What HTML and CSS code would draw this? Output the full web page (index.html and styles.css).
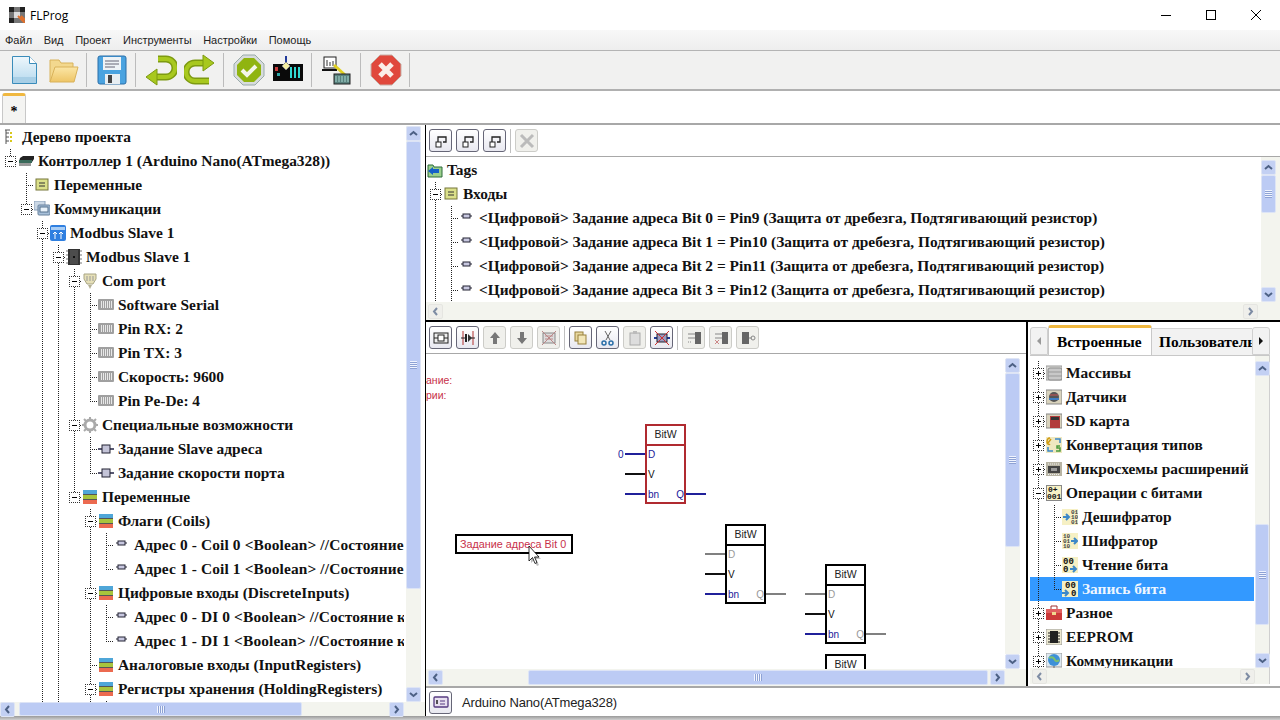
FILE: index.html
```html
<!DOCTYPE html>
<html lang="ru">
<head>
    <meta charset="UTF-8">
    <title>FLProg</title>
    <link rel="stylesheet" href="styles.css">
</head>
<body>
    <svg class="defs">
        <defs>
            <linearGradient id="docFill" x1="0" y1="0" x2="0" y2="1"><stop offset="0" stop-color="#eef7fc"/><stop offset="1" stop-color="#b5d9ee"/></linearGradient>
            <linearGradient id="folderFill" x1="0" y1="0" x2="0" y2="1"><stop offset="0" stop-color="#fbe6a6"/><stop offset="1" stop-color="#eec566"/></linearGradient>
            <symbol id="i-book" viewBox="0 0 16 16"><path d="M3 1h5M4 1v14M4 4h3M4 8h3M4 12h3" stroke="#555" fill="none"/><path d="M9 3v2M9 7v2M9 11v2" stroke="#d8c81c" stroke-width="2"/></symbol>
            <symbol id="i-mcu" viewBox="0 0 16 16"><path d="M2 5l3-2h11v3l-2 3H1z" fill="#222"/><rect x="1" y="7" width="13" height="3" fill="#3a6a5a"/><path d="M2 10v3M4 10v3M6 10v3M8 10v3M10 10v3M12 10v3" stroke="#333"/></symbol>
            <symbol id="i-vars" viewBox="0 0 16 16"><rect x="2" y="2" width="12" height="11" fill="#dbe08a" stroke="#77773a"/><path d="M5 6h6M5 9h6" stroke="#333"/></symbol>
            <symbol id="i-comm" viewBox="0 0 16 16"><rect x="0" y="0" width="11" height="9" fill="#cbd8e6" stroke="#8ba0b8"/><rect x="4" y="4" width="12" height="10" rx="1" fill="#a9c1da" stroke="#66809c"/><rect x="6" y="6" width="8" height="5" fill="#e9f2fa" stroke="#55708c"/></symbol>
            <symbol id="i-modbus" viewBox="0 0 16 16"><rect width="16" height="16" rx="2" fill="#2f7fe0"/><rect x="1" y="2" width="14" height="3" fill="#a8cdf5"/><path d="M5 14V7M3 9l2-2 2 2M11 14V7M9 9l2-2 2 2" stroke="#fff" fill="none"/></symbol>
            <symbol id="i-chip" viewBox="0 0 16 16"><rect x="2" y="0" width="12" height="16" fill="#333"/><rect x="4" y="1" width="8" height="14" fill="#4c4c4c"/><rect x="7" y="7" width="2" height="2" fill="#111"/><path d="M0 2h2M0 6h2M0 10h2M0 14h2M14 2h2M14 6h2M14 10h2M14 14h2" stroke="#777"/></symbol>
            <symbol id="i-port" viewBox="0 0 16 16"><path d="M2 1h12v5l-3 5H5L2 6z" fill="#e6e0b8" stroke="#a8a484"/><path d="M5 3v5M8 3v5M11 3v5" stroke="#999"/><path d="M6 12h4l-2 4z" fill="#b4b094"/></symbol>
            <symbol id="i-pin" viewBox="0 0 16 16"><rect y="2" width="16" height="11" rx="1" fill="#a0a0a0"/><path d="M3.500 4v7M5.500 4v7M7.500 4v7M9.500 4v7M11.500 4v7M13.500 4v7" stroke="#e8e8e8"/></symbol>
            <symbol id="i-gear" viewBox="0 0 16 16"><circle cx="8" cy="8" r="5" fill="none" stroke="#aaa" stroke-width="3"/><path d="M8 0v3M8 13v3M0 8h3M13 8h3M2 2l2 2M12 12l2 2M14 2l-2 2M2 14l2-2" stroke="#aaa" stroke-width="2"/></symbol>
            <symbol id="i-comp" viewBox="0 0 16 16"><path d="M0 8h4M12 8h4" stroke="#224" stroke-width="1.5"/><rect x="4" y="4" width="8" height="8" fill="#c4c4d8" stroke="#223"/></symbol>
            <symbol id="i-stack" viewBox="0 0 16 16"><rect x="1" y="1" width="14" height="4" fill="#4fa6d8"/><rect x="1" y="6" width="14" height="4" fill="#a8c43c"/><rect x="1" y="11" width="14" height="4" fill="#ec6a50"/><path d="M1 5.5h14M1 10.500h14" stroke="#555"/></symbol>
            <symbol id="i-small" viewBox="0 0 16 16"><path d="M2 6h3M11 6h2" stroke="#223"/><rect x="4" y="4" width="7" height="4" fill="#c8c8e0" stroke="#223"/></symbol>
            <symbol id="i-tags" viewBox="0 0 16 16"><path d="M1 3h5l1 2h8v10H1z" fill="#9bd08c" stroke="#2d6a3a"/><path d="M1 9l5-4v2h6v4H6v2z" fill="#1560c8"/></symbol>
            <symbol id="i-db" viewBox="0 0 16 16"><rect x="0" y="1" width="16" height="14" fill="#dcdcd8" stroke="#999"/><rect x="2" y="3" width="14" height="12" rx="2" fill="#c8c8c8" stroke="#8c8c8c"/><path d="M2 7h14M2 11h14" stroke="#999"/></symbol>
            <symbol id="i-sensor" viewBox="0 0 16 16"><rect x="0" y="1" width="16" height="14" fill="#d8d2bc" stroke="#888"/><circle cx="8" cy="8" r="5" fill="#555"/><path d="M3 9h10v2H3z" fill="#3f7cc0"/><path d="M4 6h8" stroke="#c55"/></symbol>
            <symbol id="i-sd" viewBox="0 0 16 16"><rect x="0" y="1" width="16" height="14" fill="#d8d2bc" stroke="#888"/><rect x="4" y="3" width="10" height="12" fill="#b23a3a"/><rect x="5" y="4" width="8" height="3" fill="#333"/></symbol>
            <symbol id="i-conv" viewBox="0 0 16 16"><rect width="16" height="16" fill="#efe8c0"/><path d="M2 6l3-4M4 1c-2 0-3 2-3 4s2 3 3 2" stroke="#d09a10" fill="none" stroke-width="1.500"/><path d="M9 2h5v4M2 10v4h5" stroke="#3d88c8" fill="none" stroke-width="1.500"/><path d="M14 9h-3v2h3v3h-4" stroke="#4c9a3c" fill="none" stroke-width="1.500"/></symbol>
            <symbol id="i-ic" viewBox="0 0 16 16"><rect x="0" y="1" width="16" height="14" fill="#b8b4a4"/><rect x="2" y="5" width="12" height="7" fill="#444"/><rect x="5" y="7" width="6" height="3" fill="#999"/><path d="M2 3h12M2 13.500h12" stroke="#eee" stroke-dasharray="1 1"/></symbol>
            <symbol id="i-bits" viewBox="0 0 16 16"><rect x=".5" y=".5" width="15" height="15" fill="#f6f0c4" stroke="#888"/><text class="bit-txt" x="2" y="7">0+</text><text class="bit-txt" x="1" y="14">001</text></symbol>
            <symbol id="i-dec" viewBox="0 0 16 16"><rect width="16" height="16" fill="#f6f0c4"/><path d="M1 8h5M4 5l3 3-3 3" stroke="#3d88c8" fill="none" stroke-width="2"/><text class="bit-txt thin" x="9" y="5">01</text><text class="bit-txt thin" x="9" y="10">10</text><text class="bit-txt thin" x="9" y="15">01</text></symbol>
            <symbol id="i-enc" viewBox="0 0 16 16"><rect width="16" height="16" fill="#f6f0c4"/><path d="M9 8h5M12 5l3 3-3 3" stroke="#3d88c8" fill="none" stroke-width="2"/><text class="bit-txt thin" x="1" y="5">10</text><text class="bit-txt thin" x="1" y="10">01</text><text class="bit-txt thin" x="1" y="15">10</text></symbol>
            <symbol id="i-read" viewBox="0 0 16 16"><rect width="16" height="16" fill="#f6f0c4"/><text class="bit-txt big" x="1" y="7">00</text><text class="bit-txt big" x="1" y="15">0</text><path d="M8 12h5M11 9l3 3-3 3" stroke="#3d88c8" fill="none" stroke-width="2"/></symbol>
            <symbol id="i-write" viewBox="0 0 16 16"><rect width="16" height="16" fill="#f6f0c4"/><text class="bit-txt big" x="3" y="7">00</text><text class="bit-txt big" x="9" y="15">0</text><path d="M0 12h5M3 9l3 3-3 3" stroke="#3d88c8" fill="none" stroke-width="2"/></symbol>
            <symbol id="i-case" viewBox="0 0 16 16"><path d="M5 4V1h6v3" stroke="#9c3030" fill="none"/><rect y="4" width="16" height="11" fill="#cc3a3a"/><rect y="4" width="16" height="4" fill="#e06060"/><rect x="6" y="7" width="4" height="3" fill="#f0d890"/></symbol>
            <symbol id="i-eeprom" viewBox="0 0 16 16"><rect width="16" height="16" fill="#ece8d0" stroke="#999"/><rect x="4" y="2" width="8" height="12" fill="#222"/><path d="M2 4h2M2 7h2M2 10h2M2 13h2M12 4h2M12 7h2M12 10h2M12 13h2" stroke="#222"/></symbol>
            <symbol id="i-globe" viewBox="0 0 16 16"><rect width="16" height="14" fill="#dde8f0" stroke="#999"/><circle cx="8" cy="7" r="6" fill="#3d90d8"/><path d="M3 5c3-2 5 0 6 2s3 1 4 0" stroke="#7cc070" fill="none" stroke-width="2"/><path d="M8 13v3M4 16h8" stroke="#666"/></symbol>
            <symbol id="b-link" viewBox="0 0 16 16"><path d="M5 9V4h8v5h-3" fill="none" stroke="#222" stroke-width="1.300"/><rect x="3" y="9" width="5" height="5" fill="#fff" stroke="#222"/></symbol>
        </defs>
    </svg>

    <header class="titlebar">
        <svg class="app-icon" viewBox="0 0 16 16"><rect width="16" height="16" fill="#777"/><path d="M0 0h5v5H0zM11 0h5v5h-5zM0 11h5v5H0z" fill="#222"/><path d="M5 5h6v6H5z" fill="#ddd"/><path d="M9 9l7 7M12 9l4 4" stroke="#e0702c" stroke-width="2"/></svg>
        <span class="app-name">FLProg</span>
        <div class="win-btns">
            <svg viewBox="0 0 10 10"><path d="M0 5.500h10" stroke="#000"/></svg>
            <svg viewBox="0 0 10 10"><rect x=".5" y=".5" width="9" height="9" fill="none" stroke="#000"/></svg>
            <svg viewBox="0 0 10 10"><path d="M0 0l10 10M10 0L0 10" stroke="#000"/></svg>
        </div>
    </header>

    <nav class="menubar">
        <span>Файл</span><span>Вид</span><span>Проект</span><span>Инструменты</span><span>Настройки</span><span>Помощь</span>
    </nav>

    <div class="toolbar">
        <button class="tool"><svg viewBox="0 0 32 32"><path d="M4.500 2.500h17l7 7v20h-24z" fill="url(#docFill)" stroke="#3a8cba"/><path d="M21.500 2.500v7h7" fill="#fff" stroke="#3a8cba"/><rect x="5" y="23" width="23" height="6" fill="#a8cfe6"/></svg></button>
        <button class="tool"><svg viewBox="0 0 32 32"><path d="M3 28V6h9l2 3h12v4" fill="#f3d88e" stroke="#d9b25a"/><path d="M3 28l5-15h23l-4 15z" fill="url(#folderFill)" stroke="#d9b25a"/></svg></button>
        <i class="tool-sep"></i>
        <button class="tool"><svg viewBox="0 0 32 32"><rect x="2" y="2" width="28" height="28" rx="2" fill="#4aa3e0" stroke="#2a6ea8"/><rect x="7" y="3" width="18" height="13" fill="#eef3f6"/><path d="M9 7h14M9 10h14M9 13h10" stroke="#667"/><rect x="9" y="20" width="15" height="10" fill="#e8eef2"/><rect x="12" y="21" width="4" height="8" fill="#444"/></svg></button>
        <i class="tool-sep"></i>
        <button class="tool"><svg viewBox="0 0 32 32"><path d="M13 5h8a8.500 8.500 0 0 1 0 18H7" fill="none" stroke="#7d9a10" stroke-width="7"/><path d="M13 5h8a8.500 8.500 0 0 1 0 18H7" fill="none" stroke="#a8c81e" stroke-width="4"/><path d="M12 15v16L1 23z" fill="#a8c81e" stroke="#7d9a10"/></svg></button>
        <button class="tool"><svg viewBox="0 0 32 32"><path d="M19 9h-8a8.500 8.500 0 0 0 0 18h14" fill="none" stroke="#7d9a10" stroke-width="7"/><path d="M19 9h-8a8.500 8.500 0 0 0 0 18h14" fill="none" stroke="#a8c81e" stroke-width="4"/><path d="M19 1v16l11-8z" fill="#a8c81e" stroke="#7d9a10"/></svg></button>
        <i class="tool-sep"></i>
        <button class="tool"><svg viewBox="0 0 32 32"><path d="M10 1h12l9 9v12l-9 9H10l-9-9V10z" fill="#d8dcdc" stroke="#9aa"/><path d="M11 4h10l7 7v10l-7 7H11l-7-7V11z" fill="#90b410"/><path d="M9 16l5 5 9-9" fill="none" stroke="#f4f6e8" stroke-width="4"/></svg></button>
        <button class="tool"><svg viewBox="0 0 32 32"><rect x="1" y="10" width="30" height="17" fill="#0a0a0a"/><path d="M19 13v11M23 13v11M27 13v11" stroke="#30d8d0" stroke-width="2"/><rect x="3" y="13" width="3" height="4" fill="#c83c3c"/><path d="M5 19h3v3H5z" fill="#30a8a8"/><path d="M14 2v14" stroke="#223a9a" stroke-width="2"/><path d="M14 8l4 4-4 4-4-4z" fill="#f4eea0" stroke="#888"/></svg></button>
        <i class="tool-sep"></i>
        <button class="tool"><svg viewBox="0 0 32 32"><rect x="3" y="3" width="12" height="11" fill="#fff" stroke="#222"/><path d="M6 6v6M9 8v4M12 7v5" stroke="#333"/><path d="M1 16h15" stroke="#111" stroke-width="2"/><path d="M13 11l11 10" stroke="#e0d020" stroke-width="3"/><rect x="13" y="20" width="16" height="10" fill="#58807c" stroke="#222"/><path d="M15 22v6M18 22v6M21 22v6M24 22v6M27 22v6" stroke="#a8d8d0"/></svg></button>
        <i class="tool-sep"></i>
        <button class="tool"><svg viewBox="0 0 32 32"><path d="M10 1h12l9 9v12l-9 9H10l-9-9V10z" fill="#e0483c" stroke="#c8b0a8"/><path d="M10 10l12 12M22 10L10 22" stroke="#fbeee8" stroke-width="5"/></svg></button>
        <i class="tool-sep"></i>
    </div>

    <div class="tabstrip">
        <div class="doc-tab">*</div>
    </div>

    <main class="workspace">
        <section class="left-pane">
            <div class="pane-body">
                <div class="tree">
                    <div class="row"><svg class="ic"><use href="#i-book"/></svg><span>Дерево проекта</span></div>
                    <div class="row"><i class="g elbow"><b class="x minus"></b></i><svg class="ic"><use href="#i-mcu"/></svg><span>Контроллер 1 (Arduino Nano(ATmega328))</span></div>
                    <div class="row"><i class="g"></i><i class="g tee"></i><svg class="ic"><use href="#i-vars"/></svg><span>Переменные</span></div>
                    <div class="row"><i class="g"></i><i class="g elbow"><b class="x minus"></b></i><svg class="ic"><use href="#i-comm"/></svg><span>Коммуникации</span></div>
                    <div class="row"><i class="g"></i><i class="g"></i><i class="g tee"><b class="x minus"></b></i><svg class="ic"><use href="#i-modbus"/></svg><span>Modbus Slave 1</span></div>
                    <div class="row"><i class="g"></i><i class="g"></i><i class="g line"></i><i class="g tee"><b class="x minus"></b></i><svg class="ic"><use href="#i-chip"/></svg><span>Modbus Slave 1</span></div>
                    <div class="row"><i class="g"></i><i class="g"></i><i class="g line"></i><i class="g line"></i><i class="g tee"><b class="x minus"></b></i><svg class="ic"><use href="#i-port"/></svg><span>Com port</span></div>
                    <div class="row"><i class="g"></i><i class="g"></i><i class="g line"></i><i class="g line"></i><i class="g line"></i><i class="g tee"></i><svg class="ic"><use href="#i-pin"/></svg><span>Software Serial</span></div>
                    <div class="row"><i class="g"></i><i class="g"></i><i class="g line"></i><i class="g line"></i><i class="g line"></i><i class="g tee"></i><svg class="ic"><use href="#i-pin"/></svg><span>Pin RX: 2</span></div>
                    <div class="row"><i class="g"></i><i class="g"></i><i class="g line"></i><i class="g line"></i><i class="g line"></i><i class="g tee"></i><svg class="ic"><use href="#i-pin"/></svg><span>Pin TX: 3</span></div>
                    <div class="row"><i class="g"></i><i class="g"></i><i class="g line"></i><i class="g line"></i><i class="g line"></i><i class="g tee"></i><svg class="ic"><use href="#i-pin"/></svg><span>Скорость: 9600</span></div>
                    <div class="row"><i class="g"></i><i class="g"></i><i class="g line"></i><i class="g line"></i><i class="g line"></i><i class="g elbow"></i><svg class="ic"><use href="#i-pin"/></svg><span>Pin Pe-De: 4</span></div>
                    <div class="row"><i class="g"></i><i class="g"></i><i class="g line"></i><i class="g line"></i><i class="g tee"><b class="x minus"></b></i><svg class="ic"><use href="#i-gear"/></svg><span>Специальные возможности</span></div>
                    <div class="row"><i class="g"></i><i class="g"></i><i class="g line"></i><i class="g line"></i><i class="g line"></i><i class="g tee"></i><svg class="ic"><use href="#i-comp"/></svg><span>Задание Slave адреса</span></div>
                    <div class="row"><i class="g"></i><i class="g"></i><i class="g line"></i><i class="g line"></i><i class="g line"></i><i class="g elbow"></i><svg class="ic"><use href="#i-comp"/></svg><span>Задание скорости порта</span></div>
                    <div class="row"><i class="g"></i><i class="g"></i><i class="g line"></i><i class="g line"></i><i class="g elbow"><b class="x minus"></b></i><svg class="ic"><use href="#i-stack"/></svg><span>Переменные</span></div>
                    <div class="row"><i class="g"></i><i class="g"></i><i class="g line"></i><i class="g line"></i><i class="g"></i><i class="g tee"><b class="x minus"></b></i><svg class="ic"><use href="#i-stack"/></svg><span>Флаги (Coils)</span></div>
                    <div class="row"><i class="g"></i><i class="g"></i><i class="g line"></i><i class="g line"></i><i class="g"></i><i class="g line"></i><i class="g tee"></i><svg class="ic"><use href="#i-small"/></svg><span class="wide">Адрес 0 - Coil 0 &lt;Boolean&gt; //Состояние</span></div>
                    <div class="row"><i class="g"></i><i class="g"></i><i class="g line"></i><i class="g line"></i><i class="g"></i><i class="g line"></i><i class="g elbow"></i><svg class="ic"><use href="#i-small"/></svg><span class="wide">Адрес 1 - Coil 1 &lt;Boolean&gt; //Состояние</span></div>
                    <div class="row"><i class="g"></i><i class="g"></i><i class="g line"></i><i class="g line"></i><i class="g"></i><i class="g tee"><b class="x minus"></b></i><svg class="ic"><use href="#i-stack"/></svg><span>Цифровые входы (DiscreteInputs)</span></div>
                    <div class="row"><i class="g"></i><i class="g"></i><i class="g line"></i><i class="g line"></i><i class="g"></i><i class="g line"></i><i class="g tee"></i><svg class="ic"><use href="#i-small"/></svg><span class="wide">Адрес 0 - DI 0 &lt;Boolean&gt; //Состояние к</span></div>
                    <div class="row"><i class="g"></i><i class="g"></i><i class="g line"></i><i class="g line"></i><i class="g"></i><i class="g line"></i><i class="g elbow"></i><svg class="ic"><use href="#i-small"/></svg><span class="wide">Адрес 1 - DI 1 &lt;Boolean&gt; //Состояние к</span></div>
                    <div class="row"><i class="g"></i><i class="g"></i><i class="g line"></i><i class="g line"></i><i class="g"></i><i class="g tee"></i><svg class="ic"><use href="#i-stack"/></svg><span>Аналоговые входы (InputRegisters)</span></div>
                    <div class="row"><i class="g"></i><i class="g"></i><i class="g line"></i><i class="g line"></i><i class="g"></i><i class="g tee"><b class="x minus"></b></i><svg class="ic"><use href="#i-stack"/></svg><span>Регистры хранения (HoldingRegisters)</span></div>
                    <div class="row"><i class="g"></i><i class="g"></i><i class="g line"></i><i class="g line"></i><i class="g"></i><i class="g line"></i><i class="g tee"></i></div>
                </div>
                <div class="vbar vbar-left">
                    <b class="sb-btn up"></b>
                    <div class="track"><div class="thumb grip-h"></div></div>
                    <b class="sb-btn down"></b>
                </div>
            </div>
            <div class="hbar hbar-left">
                <b class="sb-btn left"></b>
                <div class="track"><div class="thumb grip-v"></div></div>
                <b class="sb-btn right"></b>
            </div>
        </section>

        <div class="right-col">
            <section class="tags-pane">
                <div class="btn-row tags-tools">
                    <button class="mini"><svg><use href="#b-link"/></svg></button>
                    <button class="mini"><svg><use href="#b-link"/></svg></button>
                    <button class="mini"><svg><use href="#b-link"/></svg></button>
                    <i class="mini-sep"></i>
                    <button class="mini off"><svg viewBox="0 0 16 16"><path d="M2 2l12 12M14 2L2 14" stroke="#bbb" stroke-width="3"/></svg></button>
                </div>
                <div class="pane-body tags-body">
                    <div class="tree">
                        <div class="row"><svg class="ic"><use href="#i-tags"/></svg><span>Tags</span></div>
                        <div class="row"><i class="g tee"><b class="x minus"></b></i><svg class="ic"><use href="#i-vars"/></svg><span>Входы</span></div>
                        <div class="row"><i class="g line"></i><i class="g tee"></i><svg class="ic"><use href="#i-small"/></svg><span>&lt;Цифровой&gt; Задание адреса Bit 0 = Pin9 (Защита от дребезга, Подтягивающий резистор)</span></div>
                        <div class="row"><i class="g line"></i><i class="g tee"></i><svg class="ic"><use href="#i-small"/></svg><span>&lt;Цифровой&gt; Задание адреса Bit 1 = Pin10 (Защита от дребезга, Подтягивающий резистор)</span></div>
                        <div class="row"><i class="g line"></i><i class="g tee"></i><svg class="ic"><use href="#i-small"/></svg><span>&lt;Цифровой&gt; Задание адреса Bit 2 = Pin11 (Защита от дребезга, Подтягивающий резистор)</span></div>
                        <div class="row"><i class="g line"></i><i class="g tee"></i><svg class="ic"><use href="#i-small"/></svg><span>&lt;Цифровой&gt; Задание адреса Bit 3 = Pin12 (Защита от дребезга, Подтягивающий резистор)</span></div>
                    </div>
                    <div class="vbar vbar-tags">
                        <b class="sb-btn up"></b>
                        <div class="track"><div class="thumb grip-h"></div></div>
                        <b class="sb-btn down"></b>
                    </div>
                </div>
                <div class="hbar hbar-tags">
                    <b class="sb-btn left off"></b>
                    <div class="track"></div>
                    <b class="sb-btn right off"></b>
                </div>
            </section>

            <div class="lower">
                <section class="editor">
                    <div class="btn-row editor-tools">
                        <button class="mini"><svg viewBox="0 0 16 16"><rect x="1" y="3" width="14" height="10" fill="#eee" stroke="#222"/><rect x="5" y="5" width="6" height="6" fill="#fff" stroke="#222"/><path d="M1 8h4M11 8h4" stroke="#222"/></svg></button>
                        <button class="mini"><svg viewBox="0 0 16 16"><path d="M3 1v14M13 1v14" stroke="#b03030"/><path d="M1 8h5M10 8h5" stroke="#222"/><rect x="5" y="4" width="2" height="8" fill="#222"/><path d="M8 4l4 4-4 4z" fill="#333"/></svg></button>
                        <button class="mini off"><svg viewBox="0 0 16 16"><path d="M8 2l5 6h-3v6H6V8H3z" fill="#777"/></svg></button>
                        <button class="mini off"><svg viewBox="0 0 16 16"><path d="M8 14l5-6h-3V2H6v6H3z" fill="#777"/></svg></button>
                        <button class="mini off"><svg viewBox="0 0 16 16"><rect x="2" y="3" width="12" height="10" fill="#ddd" stroke="#888"/><path d="M4 6h8M4 9h8M1 1l14 14M15 1L1 15" stroke="#b88"/></svg></button>
                        <i class="mini-sep"></i>
                        <button class="mini"><svg viewBox="0 0 16 16"><rect x="2" y="2" width="8" height="9" fill="#e8d8a0" stroke="#98803c"/><rect x="5" y="5" width="8" height="9" fill="#f2e6b8" stroke="#98803c"/></svg></button>
                        <button class="mini"><svg viewBox="0 0 16 16"><path d="M5 1l5 9M11 1L6 10" stroke="#666"/><circle cx="4" cy="13" r="2" fill="none" stroke="#2a6ea8" stroke-width="1.500"/><circle cx="11" cy="13" r="2" fill="none" stroke="#2a6ea8" stroke-width="1.500"/></svg></button>
                        <button class="mini off"><svg viewBox="0 0 16 16"><rect x="3" y="3" width="10" height="12" fill="#ddd" stroke="#aaa"/><rect x="6" y="1" width="4" height="3" fill="#bbb"/></svg></button>
                        <button class="mini"><svg viewBox="0 0 16 16"><path d="M0 8h3M13 8h3" stroke="#223a9a" stroke-width="2"/><rect x="3" y="4" width="10" height="8" fill="#9a9ac0" stroke="#223"/><path d="M1 1l14 14M15 1L1 15" stroke="#d03030"/></svg></button>
                        <i class="mini-sep"></i>
                        <button class="mini off"><svg viewBox="0 0 16 16"><rect x="9" y="2" width="6" height="12" fill="#666"/><path d="M2 4h7M2 8h7" stroke="#888"/><path d="M2 12h3" stroke="#888" stroke-dasharray="1 1"/></svg></button>
                        <button class="mini off"><svg viewBox="0 0 16 16"><rect x="9" y="2" width="6" height="12" fill="#666"/><path d="M2 4h7M2 8h7" stroke="#888"/><path d="M2 10l4 4M6 10l-4 4" stroke="#c88"/></svg></button>
                        <button class="mini off"><svg viewBox="0 0 16 16"><rect x="2" y="2" width="7" height="12" fill="#666"/><path d="M9 8h3" stroke="#888"/><circle cx="13" cy="8" r="2" fill="none" stroke="#888"/></svg></button>
                    </div>
                    <div class="pane-body editor-body">
                        <div class="canvas">
                            <div class="note note-a">ание:</div>
                            <div class="note note-b">рии:</div>

                            <div class="block selected b1">
                                <div class="block-title">BitW</div>
                                <div class="pin blue"><i class="wire in"></i><em class="const">0</em><span>D</span></div>
                                <div class="pin black"><i class="wire in"></i><span>V</span></div>
                                <div class="pin blue"><i class="wire in"></i><span>bn</span><span>Q</span><i class="wire out"></i></div>
                            </div>

                            <div class="block b2">
                                <div class="block-title">BitW</div>
                                <div class="pin gray"><i class="wire in"></i><span>D</span></div>
                                <div class="pin black"><i class="wire in"></i><span>V</span></div>
                                <div class="pin blue"><i class="wire in"></i><span>bn</span><span class="pin-gray">Q</span><i class="wire out wire-gray"></i></div>
                            </div>

                            <div class="block b3">
                                <div class="block-title">BitW</div>
                                <div class="pin gray"><i class="wire in"></i><span>D</span></div>
                                <div class="pin black"><i class="wire in"></i><span>V</span></div>
                                <div class="pin blue"><i class="wire in"></i><span>bn</span><span class="pin-gray">Q</span><i class="wire out wire-gray"></i></div>
                            </div>

                            <div class="block b4">
                                <div class="block-title">BitW</div>
                            </div>

                            <div class="label-block">Задание адреса Bit 0</div>

                            <svg class="cursor" viewBox="0 0 14 20"><path d="M3 3l10 10h-5l3 6-2 1-3-6-3 3z" fill="#000" opacity=".25"/><path d="M1 0v15l3.500-3.500 2.500 6 2-1-2.500-5.500H11z" fill="#fff" stroke="#000" stroke-width=".8"/></svg>
                        </div>
                        <div class="vbar vbar-editor">
                            <b class="sb-btn up"></b>
                            <div class="track"><div class="thumb grip-h"></div></div>
                            <b class="sb-btn down"></b>
                        </div>
                    </div>
                    <div class="hbar hbar-editor">
                        <b class="sb-btn left"></b>
                        <div class="track"><div class="thumb grip-v"></div></div>
                        <b class="sb-btn right"></b>
                    </div>
                </section>

                <aside class="palette">
                    <div class="palette-tabs">
                        <b class="tab-nav"><i class="tri tri-l"></i></b>
                        <div class="pal-tab active">Встроенные</div>
                        <div class="pal-tab">Пользователь</div>
                        <b class="tab-nav"><i class="tri tri-r"></i></b>
                    </div>
                    <div class="palette-box">
                        <div class="pane-body palette-body">
                            <div class="tree">
                                <div class="row"><i class="g tee"><b class="x plus"></b></i><svg class="ic"><use href="#i-db"/></svg><span>Массивы</span></div>
                                <div class="row"><i class="g tee"><b class="x plus"></b></i><svg class="ic"><use href="#i-sensor"/></svg><span>Датчики</span></div>
                                <div class="row"><i class="g tee"><b class="x plus"></b></i><svg class="ic"><use href="#i-sd"/></svg><span>SD карта</span></div>
                                <div class="row"><i class="g tee"><b class="x plus"></b></i><svg class="ic"><use href="#i-conv"/></svg><span>Конвертация типов</span></div>
                                <div class="row"><i class="g tee"><b class="x plus"></b></i><svg class="ic"><use href="#i-ic"/></svg><span>Микросхемы расширений</span></div>
                                <div class="row"><i class="g tee"><b class="x minus"></b></i><svg class="ic"><use href="#i-bits"/></svg><span>Операции с битами</span></div>
                                <div class="row"><i class="g line"></i><i class="g tee"></i><svg class="ic"><use href="#i-dec"/></svg><span>Дешифратор</span></div>
                                <div class="row"><i class="g line"></i><i class="g tee"></i><svg class="ic"><use href="#i-enc"/></svg><span>Шифратор</span></div>
                                <div class="row"><i class="g line"></i><i class="g tee"></i><svg class="ic"><use href="#i-read"/></svg><span>Чтение бита</span></div>
                                <div class="row picked"><i class="g line"></i><i class="g elbow"></i><svg class="ic"><use href="#i-write"/></svg><span>Запись бита</span></div>
                                <div class="row"><i class="g tee"><b class="x plus"></b></i><svg class="ic"><use href="#i-case"/></svg><span>Разное</span></div>
                                <div class="row"><i class="g tee"><b class="x plus"></b></i><svg class="ic"><use href="#i-eeprom"/></svg><span>EEPROM</span></div>
                                <div class="row"><i class="g tee"><b class="x plus"></b></i><svg class="ic"><use href="#i-globe"/></svg><span>Коммуникации</span></div>
                            </div>
                            <div class="vbar vbar-palette">
                                <b class="sb-btn up"></b>
                                <div class="track"><div class="thumb grip-h"></div></div>
                                <b class="sb-btn down"></b>
                            </div>
                        </div>
                        <div class="hbar hbar-palette">
                            <b class="sb-btn left off"></b>
                            <div class="track"></div>
                            <b class="sb-btn right off"></b>
                        </div>
                    </div>
                </aside>
            </div>

            <footer class="statusbar">
                <button class="mini"><svg viewBox="0 0 16 16"><rect x="1" y="3" width="14" height="10" rx="1" fill="#e8e0f0" stroke="#553a80" stroke-width="1.300"/><path d="M4 6v4" stroke="#222" stroke-width="1.500"/><path d="M7 7h5M7 10h5" stroke="#553a80"/></svg></button>
                <span>Arduino Nano(ATmega328)</span>
            </footer>
        </div>
    </main>
    <div class="bottom-edge"></div>
</body>
</html>
```

FILE: styles.css
```css
* {
    margin: 0;
    padding: 0;
    box-sizing: border-box;
}

body {
    width: 1280px;
    height: 720px;
    overflow: hidden;
    background-color: #fff;
    color: #000;
    font-family: 'Liberation Sans', Arial, sans-serif;
}

.defs {
    position: absolute;
    width: 0;
    height: 0;
}

.bit-txt {
    font: bold 8px 'Liberation Mono', monospace;
    fill: #111;
}

.bit-txt.thin {
    font-size: 6px;
    fill: #444;
}

.bit-txt.big {
    font-size: 9px;
}

/* title + menu */
.titlebar {
    height: 30px;
    display: flex;
    align-items: center;
    padding-left: 9px;
    background-color: #fff;
}

.app-icon {
    width: 16px;
    height: 16px;
}

.app-name {
    margin-left: 5px;
    font: 12px 'Open Sans', sans-serif;
}

.win-btns {
    margin-left: auto;
    display: flex;
    gap: 35px;
    padding-right: 19px;
}

.win-btns svg {
    width: 10px;
    height: 10px;
    display: block;
}

.menubar {
    height: 20px;
    display: flex;
    align-items: center;
    gap: 11.6px;
    padding-left: 5px;
    background: linear-gradient(#f8f8f8, #eeeeee);
    font-size: 11px;
    color: #222;
}

.toolbar {
    height: 41px;
    display: flex;
    align-items: center;
    padding-left: 4px;
    background-color: #f1f1f0;
    border-top: 1px solid #b4b4b4;
    border-bottom: 2px solid #b0b0b0;
}

.tool {
    width: 39px;
    height: 34px;
    flex: none;
    border: none;
    background: none;
    display: flex;
    align-items: center;
    justify-content: center;
}

.tool svg {
    width: 32px;
    height: 32px;
}

.tool-sep {
    width: 1px;
    height: 34px;
    margin: 0 5px 0 4px;
    background-color: #bcbcbc;
}

.tabstrip {
    height: 32px;
    display: flex;
    align-items: flex-end;
    padding-left: 2px;
    background-color: #fff;
}

.doc-tab {
    width: 24px;
    height: 30px;
    padding-top: 8px;
    border: 1px solid #c8c8c8;
    border-top: 3px solid #f0b840;
    border-bottom: none;
    border-radius: 3px 3px 0 0;
    background-color: #f4f4f2;
    text-align: center;
    font: bold 14px 'Liberation Serif', serif;
}

/* main split */
.workspace {
    height: 593px;
    display: flex;
    border-top: 2px solid #a8a8a8;
}

.bottom-edge {
    height: 4px;
    background: linear-gradient(#9a9a9a, #d0d0d0);
}

.left-pane {
    width: 426px;
    flex: none;
    display: flex;
    flex-direction: column;
    border-right: 1px solid #000;
}

.right-col {
    flex: 1;
    min-width: 0;
    display: flex;
    flex-direction: column;
}

.pane-body {
    flex: 1;
    min-height: 0;
    display: flex;
}

/* trees */
.tree {
    flex: 1;
    min-width: 0;
    overflow: hidden;
    font: bold 15.4px 'Liberation Serif', 'Times New Roman', serif;
    color: #111;
}

.left-pane .tree {
    padding-left: 2px;
}

.row {
    height: 24px;
    display: flex;
    align-items: center;
    white-space: nowrap;
}

.row span {
    margin-left: 4px;
}

.row span.wide {
    letter-spacing: .13px;
}

.row.picked {
    background-color: #3399ff;
    color: #eef6ff;
}

.ic {
    width: 16px;
    height: 16px;
    flex: none;
}

.g {
    width: 16px;
    height: 24px;
    flex: none;
    display: flex;
    align-items: center;
    justify-content: center;
    --dots-v: repeating-linear-gradient(to bottom, #222 0 1px, transparent 1px 2px);
    --dots-h: repeating-linear-gradient(to right, #222 0 1px, transparent 1px 2px);
    background-repeat: no-repeat;
}

.g.line {
    background-image: var(--dots-v);
    background-size: 1px 24px;
    background-position: 8px 0;
}

.g.tee {
    background-image: var(--dots-v), var(--dots-h);
    background-size: 1px 24px, 8px 1px;
    background-position: 8px 0, 8px 12px;
}

.g.elbow {
    background-image: var(--dots-v), var(--dots-h);
    background-size: 1px 12px, 8px 1px;
    background-position: 8px 0, 8px 12px;
}

.x {
    width: 11px;
    height: 11px;
    margin-left: 1px;
    border: 1px dotted #333;
    background-color: #fff;
    background-repeat: no-repeat;
}

.x.minus {
    background-image: linear-gradient(#000, #000);
    background-size: 5px 1px;
    background-position: center;
}

.x.plus {
    background-image: linear-gradient(#000, #000), linear-gradient(#000, #000);
    background-size: 5px 1px, 1px 5px;
    background-position: center, center;
}

/* scrollbars */
.vbar, .hbar {
    display: flex;
    flex: none;
    background-color: #f3f4ee;
}

.vbar {
    flex-direction: column;
}

.track {
    flex: 1;
    min-width: 0;
    min-height: 0;
    display: flex;
}

.vbar .track {
    flex-direction: column;
}

.sb-btn {
    width: 15px;
    height: 15px;
    flex: none;
    border: 1px solid #dfe5f5;
    border-radius: 2px;
    background-color: #c3d0f3;
    background-repeat: no-repeat;
    background-position: center;
    background-size: 9px 9px;
}

.sb-btn.up { background-image: url("data:image/svg+xml,%3Csvg xmlns='http://www.w3.org/2000/svg' viewBox='0 0 9 9'%3E%3Cpath d='M1 6l3.500-3L8 6' fill='none' stroke='%234d6185' stroke-width='2'/%3E%3C/svg%3E"); }
.sb-btn.down { background-image: url("data:image/svg+xml,%3Csvg xmlns='http://www.w3.org/2000/svg' viewBox='0 0 9 9'%3E%3Cpath d='M1 3l3.500 3L8 3' fill='none' stroke='%234d6185' stroke-width='2'/%3E%3C/svg%3E"); }
.sb-btn.left { background-image: url("data:image/svg+xml,%3Csvg xmlns='http://www.w3.org/2000/svg' viewBox='0 0 9 9'%3E%3Cpath d='M6 1L3 4.500 6 8' fill='none' stroke='%234d6185' stroke-width='2'/%3E%3C/svg%3E"); }
.sb-btn.right { background-image: url("data:image/svg+xml,%3Csvg xmlns='http://www.w3.org/2000/svg' viewBox='0 0 9 9'%3E%3Cpath d='M3 1l3 3.500L3 8' fill='none' stroke='%234d6185' stroke-width='2'/%3E%3C/svg%3E"); }

.sb-btn.off {
    background-color: #eeeeea;
    border-color: #e0e0dc;
    opacity: .7;
}

.thumb {
    background-color: #bccbf4;
    border: 1px solid #dde4f6;
    border-radius: 2px;
    background-repeat: no-repeat;
    background-position: center;
}

.grip-h {
    background-image: repeating-linear-gradient(to bottom, #f0f4ff 0 1px, #8ea2d4 1px 2px);
    background-size: 7px 8px;
}

.grip-v {
    background-image: repeating-linear-gradient(to right, #f0f4ff 0 1px, #8ea2d4 1px 2px);
    background-size: 8px 7px;
}

.hbar {
    height: 16px;
    align-items: center;
}

.vbar-left {
    width: 15px;
    margin: 1px 4px 0 2px;
}

.vbar-left .thumb {
    height: 448px;
}

.hbar-left {
    height: 14px;
    padding-right: 21px;
}

.hbar-left .thumb {
    width: 283px;
    height: 14px;
    margin-left: 4px;
}

/* right side */
.tags-pane {
    height: 197px;
    flex: none;
    display: flex;
    flex-direction: column;
    border-bottom: 2px solid #000;
}

.btn-row {
    display: flex;
    align-items: center;
    gap: 4px;
    padding-left: 3px;
    background-color: #fff;
    border-bottom: 1px solid #a8a8a8;
    flex: none;
}

.tags-tools {
    height: 32px;
}

.editor-tools {
    height: 32px;
}

.mini {
    width: 23px;
    height: 23px;
    flex: none;
    border: 1px solid #667;
    border-radius: 3px;
    background: linear-gradient(#ffffff, #e8e8f0);
    display: flex;
    align-items: center;
    justify-content: center;
}

.mini svg {
    width: 16px;
    height: 16px;
}

.mini.off {
    border-color: #ccccc8;
    background: #f0f0ec;
}

.mini-sep {
    width: 1px;
    height: 24px;
    background-color: #c0c0c0;
}

.tags-body .tree {
    padding-left: 1px;
    padding-top: 1px;
}

.vbar-tags {
    width: 19px;
    padding: 3px 4px 0 0;
}

.vbar-tags .thumb {
    height: 38px;
}

.hbar-tags {
    height: 18px;
    padding: 0 22px 0 2px;
}

.lower {
    flex: 1;
    min-height: 0;
    display: flex;
    border-bottom: 2px solid #a8a8a8;
}

.editor {
    width: 600px;
    flex: none;
    display: flex;
    flex-direction: column;
}

.canvas {
    position: relative;
    flex: 1;
    min-width: 0;
    overflow: hidden;
    background-color: #fff;
    font-size: 10px;
}

.note {
    position: absolute;
    left: 0;
    color: #c8304a;
    font-size: 10.5px;
}

.note-a { top: 20px; }
.note-b { top: 35px; }

.block {
    position: absolute;
    width: 41px;
    height: 80px;
    border: 2px solid #000;
    background-color: #fff;
}

.block.selected {
    border-color: #b02a30;
}

.b1 { left: 219px; top: 70px; }
.b2 { left: 299px; top: 170px; }
.b3 { left: 399px; top: 210px; }
.b4 { left: 399px; top: 300px; }

.block-title {
    height: 20px;
    border-bottom: 2px solid #000;
    text-align: center;
    font-size: 10.5px;
    line-height: 17px;
    color: #222;
}

.selected .block-title {
    border-color: #b02a30;
}

.pin {
    position: relative;
    height: 20px;
    display: flex;
    align-items: center;
    justify-content: space-between;
    padding: 0 0 0 1px;
    margin-top: -2px;
}

.pin + .pin {
    margin-top: 0;
}

.pin.blue { color: #20209a; }
.pin.black { color: #111; }
.pin.gray { color: #999; }
.pin-gray { color: #999; }

.wire {
    position: absolute;
    top: 9px;
    width: 20px;
    height: 2px;
    background-color: currentColor;
}

.pin.gray .wire { background-color: #808080; }
.wire.in { left: -22px; }
.wire.out { right: -22px; }
.wire-gray { background-color: #808080; }

.const {
    position: absolute;
    left: -29px;
    font-style: normal;
}

.label-block {
    position: absolute;
    left: 29px;
    top: 180px;
    width: 118px;
    height: 20px;
    border: 2px solid #000;
    background-color: #fff;
    color: #c8304a;
    font-size: 10.8px;
    line-height: 17px;
    padding-left: 3px;
    white-space: nowrap;
}

.cursor {
    position: absolute;
    left: 102px;
    top: 192px;
    width: 14px;
    height: 20px;
}

.vbar-editor {
    width: 21px;
    padding: 4px 6px 0 0;
    background-color: #fff;
}

.vbar-editor .track {
    background-color: #f3f4ee;
}

.vbar-editor .thumb {
    height: 174px;
}

.hbar-editor {
    height: 17px;
    padding: 0 21px 0 2px;
}

.hbar-editor .thumb {
    width: 460px;
    height: 15px;
    margin-left: 85px;
}

.palette {
    flex: 1;
    min-width: 0;
    display: flex;
    flex-direction: column;
    border-left: 2px solid #000;
    padding: 3px 10px 2px 2px;
}

.palette-tabs {
    height: 30px;
    flex: none;
    display: flex;
    align-items: flex-end;
    overflow: hidden;
}

.tab-nav {
    width: 18px;
    height: 28px;
    flex: none;
    display: flex;
    align-items: center;
    justify-content: center;
    border: 1px solid #cfcfcf;
    border-radius: 3px 3px 0 0;
    background-color: #f2f2f2;
}

.tri {
    width: 0;
    height: 0;
    border-top: 4px solid transparent;
    border-bottom: 4px solid transparent;
}

.tri-l { border-right: 4px solid #999; }
.tri-r { border-left: 4px solid #111; }

.pal-tab {
    width: 100px;
    height: 27px;
    flex: none;
    padding-left: 7px;
    overflow: hidden;
    white-space: nowrap;
    background-color: #f2f2f2;
    font: bold 15.4px/26px 'Liberation Serif', serif;
    border-top: 1px solid #d4d4d4;
}

.pal-tab.active {
    width: 104px;
    height: 30px;
    padding-left: 8px;
    background-color: #fff;
    border: 1px solid #c8c8c8;
    border-top: 3px solid #f0b840;
    border-bottom: none;
    border-radius: 3px 3px 0 0;
    line-height: 27px;
}

.palette-box {
    flex: 1;
    min-height: 0;
    display: flex;
    flex-direction: column;
    border-right: 1px solid #cfcfcf;
    border-top: 1px solid #c8c8c8;
}

.palette-body .tree {
    padding-top: 5px;
    margin-right: 1px;
}

.vbar-palette {
    width: 14px;
    padding-top: 5px;
}

.vbar-palette .track {
    padding-top: 148px;
}

.vbar-palette .thumb {
    height: 101px;
}

.hbar-palette {
    height: 16px;
    padding: 0 14px 0 2px;
    justify-content: space-between;
}

.statusbar {
    height: 28px;
    flex: none;
    display: flex;
    align-items: center;
    gap: 10px;
    padding-left: 3px;
    font-size: 13px;
    letter-spacing: -.13px;
    color: #222;
}
```
